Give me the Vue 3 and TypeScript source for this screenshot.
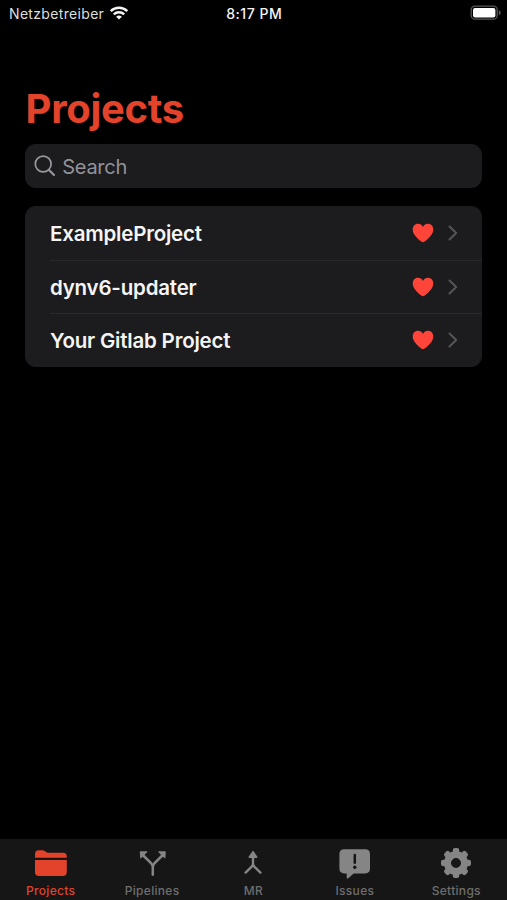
<script setup lang="ts">
import { ref } from 'vue'

interface Tab {
  id: string
  label: string
}

const projects: string[] = ['ExampleProject', 'dynv6-updater', 'Your Gitlab Project']
const tabs: Tab[] = [
  { id: 'projects', label: 'Projects' },
  { id: 'pipelines', label: 'Pipelines' },
  { id: 'mr', label: 'MR' },
  { id: 'issues', label: 'Issues' },
  { id: 'settings', label: 'Settings' },
]
const active = ref('projects')
const query = ref('')
const teeth = [0, 45, 90, 135, 180, 225, 270, 315]
</script>

<template>
  <div class="screen">
    <header class="status">
      <div class="carrier">
        <span class="carrier-name">Netzbetreiber</span>
        <svg class="wifi" width="20" height="16" viewBox="0 0 20 16" fill="none" stroke="#f4f4f4" stroke-width="2.4">
          <path d="M1.7 6.1C6.4 1.6 13.6 1.6 18.3 6.1" />
          <path d="M4.8 9.3C7.7 6.5 12.3 6.5 15.2 9.3" />
          <path d="M10 14.6 7.1 11.7Q10 9.3 12.9 11.7Z" fill="#f4f4f4" stroke="none" />
        </svg>
      </div>
      <span class="time">8:17 PM</span>
      <svg class="battery" width="32" height="16" viewBox="0 0 32 16">
        <rect x="1.2" y="1.2" width="26" height="13" rx="3.8" fill="none" stroke="#58585a" stroke-width="1.3" />
        <rect x="3" y="3" width="22.4" height="9.4" rx="2" fill="#fff" />
        <path d="M28.8 5.2Q30.8 6 30.8 7.7T28.8 10.2Z" fill="#58585a" />
      </svg>
    </header>

    <main class="content">
      <h1 class="title">Projects</h1>
      <label class="search">
        <svg width="24" height="24" viewBox="0 0 24 24" fill="none" stroke="#98989e" stroke-linecap="round">
          <circle cx="10.2" cy="10" r="7.9" stroke-width="1.7" />
          <path d="M16 15.9 21 20.9" stroke-width="2.1" />
        </svg>
        <input v-model="query" type="text" placeholder="Search" />
      </label>

      <ul class="list">
        <li v-for="name in projects" :key="name" class="row">
          <span class="name">{{ name }}</span>
          <svg class="heart" width="22" height="20" viewBox="0 0 22 20">
            <path d="M11 19.2C9.9 19.2.7 13 .7 6.5.7 3.2 2.9.8 5.9.8 8.2.8 10 2 11 3.9 12 2 13.8.8 16.1.8c3 0 5.2 2.4 5.2 5.7C21.3 13 12.1 19.2 11 19.2Z" fill="#ff453a" />
          </svg>
          <svg class="chevron" width="10" height="16" viewBox="0 0 10 16">
            <path d="M1.5 1.5 8.2 8 1.5 14.5" fill="none" stroke="#565659" stroke-width="2" stroke-linecap="round" stroke-linejoin="round" />
          </svg>
        </li>
      </ul>
    </main>

    <nav class="tabs">
      <button v-for="tab in tabs" :key="tab.id" class="tab" :class="{ active: active === tab.id }" @click="active = tab.id">
        <svg width="36" height="34" viewBox="0 0 36 34" fill="currentColor">
          <g v-if="tab.id === 'projects'">
            <path d="M2 11.8V8Q2 4.2 5.8 4.2H9.2Q10.7 4.2 11.8 5.1L13 6Q13.9 6.7 15 6.7H30.2Q33.8 6.7 33.8 10.3V11.8Z" />
            <path d="M2 13.9H33.8V25.9Q33.8 29.9 29.8 29.9H6Q2 29.9 2 25.9Z" />
          </g>
          <g v-else-if="tab.id === 'pipelines'">
            <path d="M18.8 28.8V21.5Q18.8 19 17 17.2L8.8 9M18.8 21.5Q18.8 19 20.6 17.2L28.8 9" fill="none" stroke="currentColor" stroke-width="2.5" stroke-linecap="round" />
            <path d="M6.6 5.2H12.8Q13.9 5.3 13.1 6.2L7.3 12Q6.3 12.9 6.2 11.8L5.8 6Q5.8 5.2 6.6 5.2ZM31 5.2H24.8Q23.7 5.3 24.5 6.2L30.3 12Q31.3 12.9 31.4 11.8L31.8 6Q31.8 5.2 31 5.2Z" />
          </g>
          <g v-else-if="tab.id === 'mr'">
            <path d="M18 10V17.5Q18 19.4 16.7 20.7L10.6 26.6M18 17.5Q18 19.4 19.3 20.7L25.4 26.6" fill="none" stroke="currentColor" stroke-width="2.4" stroke-linecap="round" />
            <path d="M17.2 5.4Q18 4.3 18.8 5.4L22.4 10.8Q22.8 12.1 21.4 12.1H14.6Q13.2 12.1 13.6 10.8Z" />
          </g>
          <g v-else-if="tab.id === 'issues'">
            <path d="M7.2 3.2H28.2Q33 3.2 33 8V22.6Q33 27.4 28.2 27.4H16.7L11.3 32.2Q9.7 33.3 9.7 31.4V27.4H7.2Q2.4 27.4 2.4 22.6V8Q2.4 3.2 7.2 3.2Z" />
            <path d="M17.8 8.9V16.8" stroke="#161616" stroke-width="2.5" stroke-linecap="round" />
            <circle cx="17.8" cy="21.2" r="1.7" fill="#161616" />
          </g>
          <g v-else>
            <rect v-for="angle in teeth" :key="angle" x="14.8" y="2" width="6.4" height="10" rx="2.1" :transform="`rotate(${angle} 18 17)`" />
            <circle cx="18" cy="17" r="8.5" fill="none" stroke="currentColor" stroke-width="7" />
          </g>
        </svg>
        <span class="label">{{ tab.label }}</span>
      </button>
    </nav>
  </div>
</template>

<style>
body {
  background: #000;
}
</style>

<style scoped>
.screen {
  box-sizing: border-box;
  width: 100%;
  height: 100vh;
  display: flex;
  flex-direction: column;
  overflow: hidden;
  background: #000;
  color: #f5f5f5;
  font-family: Inter, "Liberation Sans", sans-serif;
}
.status {
  display: grid;
  grid-template-columns: 1fr auto 1fr;
  align-items: center;
  height: 28px;
  padding: 0 5px 0 9px;
  font-size: 14px;
  line-height: 20px;
}
.carrier {
  display: flex;
  align-items: center;
  gap: 5px;
  color: #dedede;
}
.carrier-name {
  letter-spacing: 0.33px;
}
.wifi {
  margin-top: -3px;
}
.time {
  margin-right: 2.5px;
  font-weight: 500;
  letter-spacing: 0.55px;
}
.battery {
  justify-self: end;
  margin-top: -2px;
}
.content {
  flex: 1;
  padding: 56px 24.6px 0 25.3px;
}
.title {
  margin: 0;
  height: 60px;
  line-height: 50px;
  font-size: 40px;
  font-weight: 700;
  letter-spacing: -0.3px;
  text-indent: 0.3px;
  color: #e2432a;
}
.search {
  display: flex;
  align-items: center;
  gap: 5px;
  height: 43.5px;
  padding: 0 8px;
  border-radius: 11px;
  background: #1c1c1e;
}
.search input {
  flex: 1;
  min-width: 0;
  padding: 2px 0 0;
  border: 0;
  outline: 0;
  background: none;
  color: #f5f5f5;
  font: 400 20px/26px Inter, "Liberation Sans", sans-serif;
  letter-spacing: -0.28px;
}
.search input::placeholder {
  color: #929298;
  opacity: 1;
}
.list {
  list-style: none;
  margin: 18.5px 0 0;
  padding: 0;
  border-radius: 11px;
  background: #1c1c1e;
}
.row {
  box-sizing: border-box;
  display: flex;
  align-items: center;
  height: 53.6px;
  margin-left: 24.7px;
  padding-right: 24px;
}
.row + .row {
  border-top: 1px solid #29292b;
}
.name {
  flex: 1;
  padding-top: 2px;
  font-size: 20.5px;
  line-height: 28px;
  font-weight: 600;
  letter-spacing: -0.2px;
}
.heart {
  margin-right: 14px;
}
.tabs {
  display: grid;
  grid-template-columns: repeat(5, 1fr);
  height: 61px;
  background: #161616;
}
.tab {
  display: flex;
  flex-direction: column;
  align-items: center;
  padding: 7px 0 0;
  border: 0;
  background: none;
  color: #858585;
  font-family: inherit;
}
.tab.active {
  color: #e2432a;
}
.tab svg {
  flex: none;
}
.label {
  margin-top: 3px;
  font-size: 12px;
  line-height: 15px;
  font-weight: 500;
  letter-spacing: 0.3px;
}
.tab:not(.active) .label {
  color: #6e6e6e;
}
</style>
